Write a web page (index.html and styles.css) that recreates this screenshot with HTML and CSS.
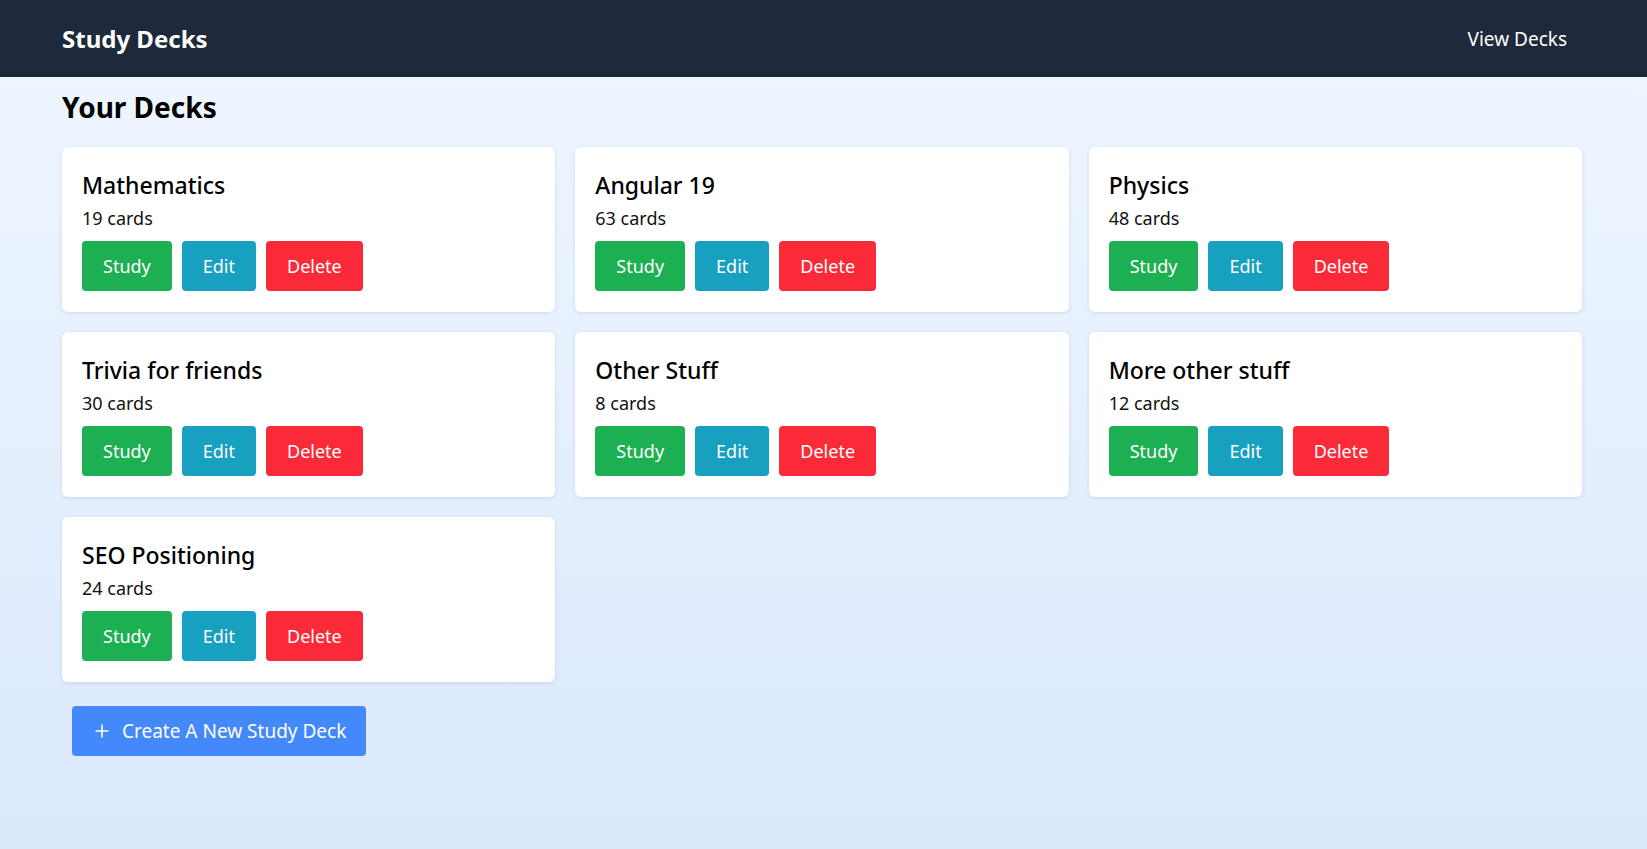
FILE: index.html
```html
<!DOCTYPE html>
<html lang="en">
<head>
<meta charset="utf-8">
<title>Study Decks</title>
<link rel="stylesheet" href="styles.css">
</head>
<body>
<header class="navbar">
  <a class="brand" href="#">Study Decks</a>
  <a class="nav-link" href="#">View Decks</a>
</header>
<main class="container">
  <h2 class="page-title">Your Decks</h2>
  <div class="deck-grid">
    <div class="deck-card">
      <h3 class="deck-title">Mathematics</h3>
      <p class="deck-count">19 cards</p>
      <div class="deck-actions"><button class="btn btn-study">Study</button><button class="btn btn-edit">Edit</button><button class="btn btn-delete">Delete</button></div>
    </div>
    <div class="deck-card">
      <h3 class="deck-title">Angular 19</h3>
      <p class="deck-count">63 cards</p>
      <div class="deck-actions"><button class="btn btn-study">Study</button><button class="btn btn-edit">Edit</button><button class="btn btn-delete">Delete</button></div>
    </div>
    <div class="deck-card">
      <h3 class="deck-title">Physics</h3>
      <p class="deck-count">48 cards</p>
      <div class="deck-actions"><button class="btn btn-study">Study</button><button class="btn btn-edit">Edit</button><button class="btn btn-delete">Delete</button></div>
    </div>
    <div class="deck-card">
      <h3 class="deck-title">Trivia for friends</h3>
      <p class="deck-count">30 cards</p>
      <div class="deck-actions"><button class="btn btn-study">Study</button><button class="btn btn-edit">Edit</button><button class="btn btn-delete">Delete</button></div>
    </div>
    <div class="deck-card">
      <h3 class="deck-title">Other Stuff</h3>
      <p class="deck-count">8 cards</p>
      <div class="deck-actions"><button class="btn btn-study">Study</button><button class="btn btn-edit">Edit</button><button class="btn btn-delete">Delete</button></div>
    </div>
    <div class="deck-card">
      <h3 class="deck-title">More other stuff</h3>
      <p class="deck-count">12 cards</p>
      <div class="deck-actions"><button class="btn btn-study">Study</button><button class="btn btn-edit">Edit</button><button class="btn btn-delete">Delete</button></div>
    </div>
    <div class="deck-card">
      <h3 class="deck-title">SEO Positioning</h3>
      <p class="deck-count">24 cards</p>
      <div class="deck-actions"><button class="btn btn-study">Study</button><button class="btn btn-edit">Edit</button><button class="btn btn-delete">Delete</button></div>
    </div>
  </div>
  <button class="create-btn"><svg class="plus" width="14" height="14" viewBox="0 0 14 14"><path d="M7 0.5V13.5M0.5 7H13.5" stroke="#fff" stroke-width="1.6" fill="none"/></svg><span>Create A New Study Deck</span></button>
</main>
</body>
</html>
```

FILE: styles.css
```css
* { box-sizing: border-box; }
html, body { margin: 0; padding: 0; }
body {
  font-family: "Noto Sans", "Open Sans", sans-serif;
  color: #111;
  min-height: 100vh;
  background: linear-gradient(180deg, #eff6ff 0%, #dbe9fd 100%);
}
.navbar {
  height: 77px;
  background: #1e293b;
  display: flex;
  align-items: center;
  justify-content: space-between;
  padding: 0 64px 0 62px;
}
.brand {
  color: #fff;
  text-decoration: none;
  font-weight: 700;
  font-size: 24px;
}
.nav-link {
  color: #fff;
  text-decoration: none;
  font-size: 19px;
  padding: 8px 16px;
}
.container {
  padding: 12px 65px 40px 62px;
}
.page-title {
  margin: 0 0 22px;
  font-size: 28px;
  line-height: 36px;
  font-weight: 700;
  color: #000;
}
.deck-grid {
  display: grid;
  grid-template-columns: repeat(3, 1fr);
  gap: 20px;
}
.deck-card {
  background: #fff;
  border-radius: 6px;
  padding: 20px 20px 21px;
  box-shadow: 0 1px 4px rgba(30, 60, 120, 0.12);
}
.deck-title {
  margin: 0;
  font-size: 23px;
  line-height: 37px;
  font-weight: 550;
  color: #000;
}
.deck-count {
  margin: 1px 0 10px;
  font-size: 18px;
  line-height: 26px;
}
.deck-actions {
  display: flex;
  gap: 10px;
}
.btn {
  font-family: inherit;
  font-size: 18px;
  line-height: 26px;
  color: #fff;
  border: none;
  border-radius: 4px;
  padding: 12px 21px;
  cursor: pointer;
}
.btn-study { background: #1cb052; }
.btn-edit { background: #17a0bf; }
.btn-delete { background: #fb2a39; }
.create-btn {
  margin: 24px 0 0 10px;
  display: inline-flex;
  align-items: center;
  gap: 13px;
  font-family: inherit;
  font-size: 19px;
  line-height: 26px;
  color: #fff;
  background: #4489fb;
  border: none;
  border-radius: 4px;
  padding: 12px 20px 12px 23px;
  cursor: pointer;
}
```
